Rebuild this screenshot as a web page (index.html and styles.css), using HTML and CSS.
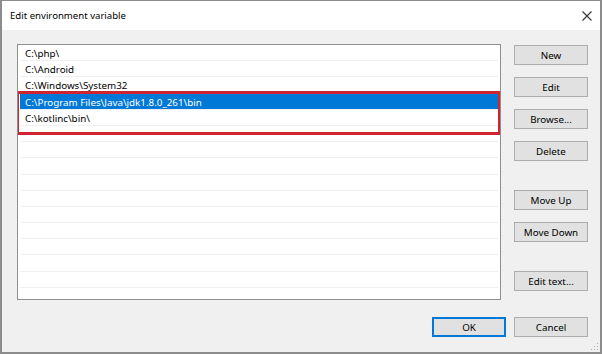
FILE: index.html
```html
<!DOCTYPE html>
<html lang="en">
<head>
  <meta charset="UTF-8" />
  <title>Edit environment variable</title>
  <link rel="stylesheet" href="styles.css">
</head>
<body>
  <div class="window">
    <div class="titlebar">
      <span class="title">Edit environment variable</span>
      <svg class="close-icon" width="10" height="10" viewBox="0 0 10 10">
        <path d="M0.5 0.5 L9.5 9.5 M9.5 0.5 L0.5 9.5" stroke="#333" stroke-width="1.1" fill="none"/>
      </svg>
    </div>

    <div class="content">
      <div class="list-wrap">
        <ul class="path-list">
          <li class="row">C:\php\</li>
          <li class="row">C:\Android</li>
          <li class="row">C:\Windows\System32</li>
          <li class="row selected">C:\Program Files\Java\jdk1.8.0_261\bin</li>
          <li class="row">C:\kotlinc\bin\</li>
          <li class="row"></li>
          <li class="row"></li>
          <li class="row"></li>
          <li class="row"></li>
          <li class="row"></li>
          <li class="row"></li>
          <li class="row"></li>
          <li class="row"></li>
          <li class="row"></li>
          <li class="row"></li>
          <li class="row"></li>
        </ul>
        <div class="highlight-box"></div>
      </div>

      <div class="side-buttons">
        <button class="btn">New</button>
        <button class="btn">Edit</button>
        <button class="btn">Browse...</button>
        <button class="btn">Delete</button>
        <button class="btn gap-before">Move Up</button>
        <button class="btn">Move Down</button>
        <button class="btn gap-before">Edit text...</button>
      </div>
    </div>

    <div class="footer">
      <button class="btn default-btn">OK</button>
      <button class="btn">Cancel</button>
    </div>

    <div class="grip"></div>
  </div>
</body>
</html>
```

FILE: styles.css
```css
* {
  box-sizing: border-box;
  margin: 0;
  padding: 0;
}

body {
  font-family: 'Noto Sans', 'Open Sans', sans-serif;
  background: #fff;
  width: 602px;
  height: 354px;
  overflow: hidden;
}

.window {
  position: relative;
  width: 602px;
  height: 354px;
  background: #f0f0f0;
  border: 1px solid #8c8c8c;
  border-width: 1px 2px 2px 2px;
}

.titlebar {
  display: flex;
  align-items: center;
  justify-content: space-between;
  height: 29px;
  background: #fff;
  padding: 0 8px 0 8px;
}

.title {
  font-size: 9.6px;
  color: #000;
}

.close-icon {
  display: block;
}

.content {
  display: flex;
  justify-content: space-between;
  padding: 14px 12px 0 15px;
}

.list-wrap {
  position: relative;
  width: 484px;
  height: 256px;
  background: #fff;
  border: 1px solid #8e8f8f;
  padding: 0 2px;
  overflow: hidden;
}

.path-list {
  list-style: none;
}

.row {
  height: 16.2px;
  line-height: 17px;
  font-size: 9.8px;
  color: #000;
  padding-left: 5px;
  border-bottom: 1px solid #f0f0f0;
  white-space: nowrap;
}

.row.selected {
  background: #0078d7;
  color: #fff;
}

.highlight-box {
  position: absolute;
  left: -2px;
  top: 46px;
  width: 485px;
  height: 44px;
  border: 3px solid #cf2530;
}

.side-buttons {
  display: flex;
  flex-direction: column;
  gap: 12px;
  width: 74px;
  padding-top: 1px;
}

.btn {
  display: block;
  width: 74px;
  height: 20px;
  background: #e1e1e1;
  border: 1px solid #adadad;
  font-family: inherit;
  font-size: 9.8px;
  color: #000;
}

.side-buttons .gap-before {
  margin-top: 17px;
}

.footer {
  display: flex;
  justify-content: flex-end;
  gap: 8px;
  padding: 17px 12px 0 0;
}

.default-btn {
  border: 2px solid #0078d7;
}

.grip {
  position: absolute;
  right: 2px;
  bottom: 2px;
  width: 8px;
  height: 8px;
  background-image: radial-gradient(circle, #b0b0b0 0.8px, transparent 1px);
  background-size: 3px 3px;
  clip-path: polygon(100% 0, 100% 100%, 0 100%);
}
```
